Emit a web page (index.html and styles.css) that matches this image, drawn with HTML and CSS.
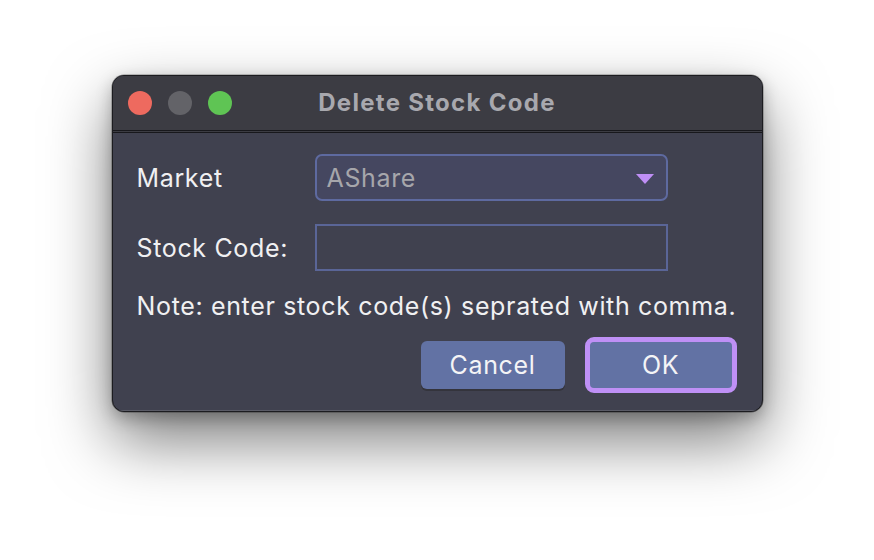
FILE: index.html
```html
<!DOCTYPE html>
<html>
<head>
<meta charset="utf-8">
<link rel="stylesheet" href="styles.css">
</head>
<body>
<div class="stage">
  <div class="window">
    <div class="titlebar">
      <div class="lights">
        <span class="light red"></span>
        <span class="light gray"></span>
        <span class="light green"></span>
      </div>
      <div class="title">Delete Stock Code</div>
    </div>
    <div class="content">
      <div class="form">
        <label class="label">Market</label>
        <div class="combo">
          <span class="combo-text">AShare</span>
          <svg class="arrow" width="18" height="10" viewBox="0 0 18 10"><path d="M0 0 H18 L9 10 Z" fill="#bf8ff6"/></svg>
        </div>
        <label class="label">Stock Code:</label>
        <div class="field"></div>
      </div>
      <div class="note">Note: enter stock code(s) seprated with comma.</div>
      <div class="buttons">
        <button class="btn cancel">Cancel</button>
        <button class="btn ok">OK</button>
      </div>
    </div>
  </div>
</div>
</body>
</html>
```

FILE: styles.css
```css
* { box-sizing: border-box; }
html, body { margin: 0; padding: 0; }
body {
  width: 874px;
  height: 560px;
  background: #ffffff;
  font-family: "Inter", "Liberation Sans", Arial, sans-serif;
  overflow: hidden;
}
.stage {
  display: flex;
  justify-content: center;
  padding-top: 75px;
}
.window {
  width: 651px;
  height: 337px;
  border-radius: 12px;
  background: #40414f;
  border: 1px solid #1c1c20;
  box-shadow: 0 0 0 0.5px rgba(0,0,0,0.4), 0 28px 64px rgba(0,0,0,0.52), 0 6px 16px rgba(0,0,0,0.25);
  overflow: hidden;
  display: flex;
  flex-direction: column;
}
.titlebar {
  position: relative;
  height: 57px;
  background: #3c3c43;
  border-bottom: 3px double #18181c;
  display: flex;
  align-items: center;
  padding-left: 15px;
  padding-bottom: 1px;
  flex-shrink: 0;
}
.lights { display: flex; gap: 16px; }
.light { width: 24px; height: 24px; border-radius: 50%; display: block; }
.red { background: #ee6a5f; }
.gray { background: #636368; }
.green { background: #5fc454; }
.title {
  position: absolute;
  left: 0; right: 0; top: 0; bottom: 0;
  display: flex;
  align-items: center;
  justify-content: center;
  font-weight: bold;
  font-size: 24px;
  letter-spacing: 1.3px;
  color: #a8a8ae;
  pointer-events: none;
  padding-bottom: 2px;
}
.content {
  flex: 1;
  padding: 21px 25px 0 23px;
  display: flex;
  flex-direction: column;
  box-shadow: inset 0 -1px 0 #5a5b66;
}
.form {
  display: grid;
  grid-template-columns: 179px 353px;
  row-gap: 23px;
  align-items: center;
}
.label {
  font-size: 25px;
  letter-spacing: 0.65px;
  color: #f0f0f2;
  padding-left: 1px;
}
.combo {
  height: 47px;
  border: 2px solid #5e6aa0;
  border-radius: 7px;
  background: #454760;
  display: flex;
  align-items: center;
  padding: 0 12px 0 10px;
  justify-content: space-between;
}
.combo-text { font-size: 25px; letter-spacing: 0.65px; color: #a6a6ab; }
.arrow { margin-top: 2px; }
.field {
  height: 47px;
  border: 2px solid #5a6597;
  background: #40414f;
}
.note {
  margin-top: 20px;
  padding-left: 1px;
  font-size: 25px;
  letter-spacing: 0.65px;
  color: #f0f0f2;
  white-space: nowrap;
}
.buttons {
  display: flex;
  justify-content: flex-end;
  align-items: center;
  gap: 20px;
  margin-top: 16px;
}
.btn {
  font-family: inherit;
  font-size: 25px;
  letter-spacing: 0.65px;
  color: #f4f4f6;
  background: #6272a4;
  border: none;
  padding: 0;
}
.cancel {
  width: 144px;
  height: 48px;
  border-radius: 6px;
  box-shadow: 0 2px 0 #34343c;
}
.ok {
  width: 152px;
  height: 56px;
  border-radius: 9px;
  border: 5px solid #bf90f6;
}
```
